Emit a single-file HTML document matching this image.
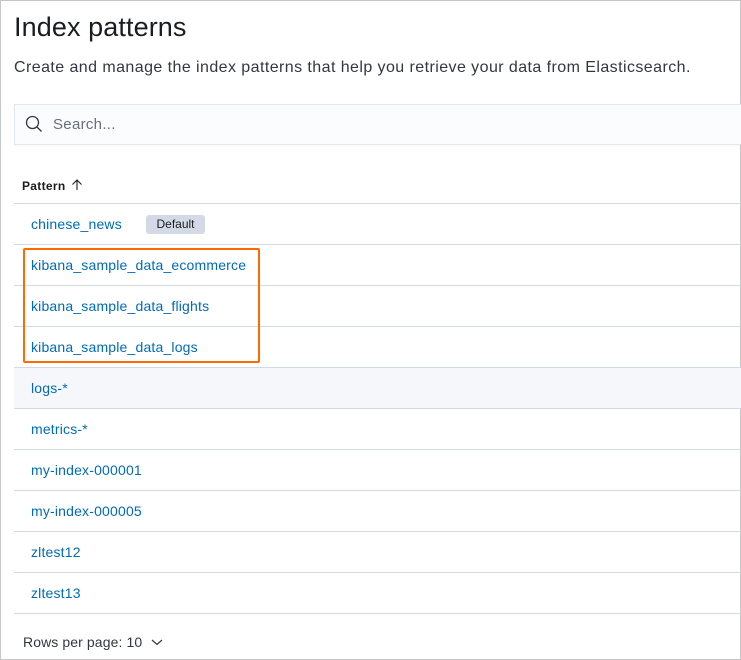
<!DOCTYPE html>
<html><head><style>
html,body{margin:0;padding:0}
body{width:741px;height:660px;position:relative;overflow:hidden;background:#fff;font-family:"Liberation Sans",sans-serif;}
.frame{position:absolute;left:0;top:0;width:739px;height:658px;border:1px solid #c6c6c6;}
h1{position:absolute;left:14px;top:12px;margin:0;font-size:27px;font-weight:400;color:#1a1c21;letter-spacing:0.1px}
.sub{position:absolute;left:14px;top:59px;font-size:16px;color:#343741;letter-spacing:0.43px}
.search{position:absolute;left:14px;top:104px;width:727px;height:39px;background:#fbfcfd;border:1px solid #e3e7ef;border-right:none;box-shadow:0 1px 2px rgba(0,0,0,.04)}
.search span{position:absolute;left:38px;top:11px;font-size:15px;color:#69707d;letter-spacing:0.3px}
.hdr{position:absolute;left:22px;top:179px;font-size:12px;font-weight:700;color:#1a1c21;letter-spacing:0.3px}
.line{position:absolute;left:14px;width:727px;height:1px;background:#d3dae6}
.row{position:absolute;left:31px;font-size:14px;color:#006bb8;letter-spacing:0.18px}
.badge{position:absolute;left:146px;top:215px;width:59px;height:19px;background:#d3dae6;border-radius:3px;font-size:12px;color:#1a1c21;text-align:center;line-height:19px}
.hl{position:absolute;left:14px;top:368px;width:727px;height:40px;background:#f5f7fa}
.box{position:absolute;left:23px;top:248px;width:233px;height:111px;border:2px solid #ff6a00;border-radius:2px}
.foot{position:absolute;left:23px;top:634px;font-size:14px;color:#343741;letter-spacing:0.1px}
</style></head><body>
<div class="frame"></div>
<h1>Index patterns</h1>
<div class="sub">Create and manage the index patterns that help you retrieve your data from Elasticsearch.</div>
<div class="search"><svg style="position:absolute;left:10px;top:10px" width="18" height="18" viewBox="0 0 18 18"><circle cx="7.5" cy="7.5" r="6" fill="none" stroke="#343741" stroke-width="1.3"/><path d="M12 12l4.5 4.5" stroke="#343741" stroke-width="1.3"/></svg><span>Search...</span></div>
<div class="hdr">Pattern <svg width="12" height="12" viewBox="0 0 12 12" style="vertical-align:-1px;margin-left:2px"><path d="M6 11V1M1.5 5.5L6 1l4.5 4.5" fill="none" stroke="#1a1c21" stroke-width="1.1"/></svg></div>
<div class="hl"></div>
<div class="line" style="top:203px"></div>
<div class="line" style="top:244px"></div>
<div class="line" style="top:285px"></div>
<div class="line" style="top:326px"></div>
<div class="line" style="top:367px"></div>
<div class="line" style="top:408px"></div>
<div class="line" style="top:449px"></div>
<div class="line" style="top:490px"></div>
<div class="line" style="top:531px"></div>
<div class="line" style="top:572px"></div>
<div class="line" style="top:613px"></div>
<div class="row" style="top:216px">chinese_news</div>
<div class="badge">Default</div>
<div class="row" style="top:257px">kibana_sample_data_ecommerce</div>
<div class="row" style="top:298px">kibana_sample_data_flights</div>
<div class="row" style="top:339px">kibana_sample_data_logs</div>
<div class="row" style="top:380px">logs-*</div>
<div class="row" style="top:421px">metrics-*</div>
<div class="row" style="top:462px">my-index-000001</div>
<div class="row" style="top:503px">my-index-000005</div>
<div class="row" style="top:544px">zltest12</div>
<div class="row" style="top:585px">zltest13</div>
<div class="box"></div>
<div class="foot">Rows per page: 10 <svg width="14" height="10" viewBox="0 0 14 10" style="margin-left:4px"><path d="M2 3l5 4.5L12 3" fill="none" stroke="#343741" stroke-width="1.2"/></svg></div>
</body></html>
